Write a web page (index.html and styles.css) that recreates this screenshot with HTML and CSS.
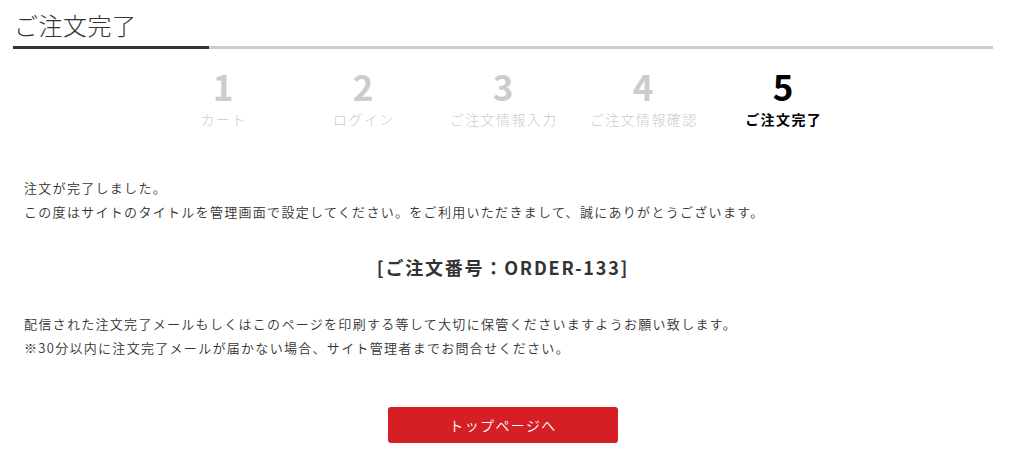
FILE: index.html
```html
<!DOCTYPE html>
<html lang="ja">
<head>
<meta charset="utf-8">
<title>ご注文完了</title>
<link rel="stylesheet" href="styles.css">
</head>
<body>
<div class="page">
  <header class="page-head">
    <h1 class="page-title">ご注文完了</h1>
    <div class="title-bar"><span class="bar-dark"></span><span class="bar-light"></span></div>
  </header>

  <ol class="steps">
    <li class="step"><span class="step-num">1</span><span class="step-label">カート</span></li>
    <li class="step"><span class="step-num">2</span><span class="step-label">ログイン</span></li>
    <li class="step"><span class="step-num">3</span><span class="step-label">ご注文情報入力</span></li>
    <li class="step"><span class="step-num">4</span><span class="step-label">ご注文情報確認</span></li>
    <li class="step is-current"><span class="step-num">5</span><span class="step-label">ご注文完了</span></li>
  </ol>

  <section class="content">
    <p class="msg">注文が完了しました。<br>この度はサイトのタイトルを管理画面で設定してください。をご利用いただきまして、誠にありがとうございます。</p>
    <p class="order-no">[ご注文番号：ORDER-133]</p>
    <p class="msg msg-note">配信された注文完了メールもしくはこのページを印刷する等して大切に保管くださいますようお願い致します。<br>※30分以内に注文完了メールが届かない場合、サイト管理者までお問合せください。</p>
    <div class="actions"><a class="btn-top" href="#">トップページへ</a></div>
  </section>
</div>
</body>
</html>
```

FILE: styles.css
```css
* { box-sizing: border-box; }
html, body { margin: 0; padding: 0; background: #fff; }
body {
  font-family: "Noto Sans CJK JP", "Noto Sans", sans-serif;
  font-weight: 350;
  color: #333;
}
.page {
  width: 980px;
  margin-left: 13px;
}
.page-head { padding-top: 7px; }
.page-title {
  margin: 0;
  padding-left: 1px;
  font-size: 24px;
  line-height: 36px;
  font-weight: 200;
  color: #333;
  letter-spacing: 0.02em;
}
.title-bar {
  display: flex;
  height: 3px;
  margin-top: 3px;
}
.bar-dark { flex: 0 0 196px; background: #333; }
.bar-light { flex: 1 1 auto; background: #ccc; }

.steps {
  list-style: none;
  margin: 17px 0 0;
  padding: 0;
  display: flex;
  justify-content: center;
}
.step {
  width: 140px;
  display: flex;
  flex-direction: column;
  align-items: center;
  color: #ccc;
}
.step-num {
  font-size: 35px;
  font-weight: 700;
  line-height: 40px;
}
.step-label {
  margin-top: 3px;
  font-size: 14px;
  line-height: 20px;
  font-weight: 300;
  letter-spacing: 0.1em;
  padding-left: 0.1em;
}
.step.is-current { color: #000; }
.step.is-current .step-label { font-weight: 700; }

.content { padding: 0 11px; }
.msg {
  margin: 47px 0 0;
  font-size: 13px;
  line-height: 24px;
  font-weight: 350;
  letter-spacing: 0.1em;
  color: #333;
}
.order-no {
  margin: 28px 0 0;
  text-align: center;
  font-size: 18px;
  line-height: 30px;
  font-weight: 700;
  letter-spacing: 0.1em;
  color: #333;
}
.msg-note { margin-top: 30px; }
.actions {
  display: flex;
  justify-content: center;
  margin-top: 47px;
}
.btn-top {
  display: flex;
  align-items: center;
  justify-content: center;
  width: 230px;
  height: 36px;
  background: #d51f24;
  color: #fff;
  border-radius: 3px;
  text-decoration: none;
  font-size: 14px;
  font-weight: 350;
  letter-spacing: 0.1em;
}
```
